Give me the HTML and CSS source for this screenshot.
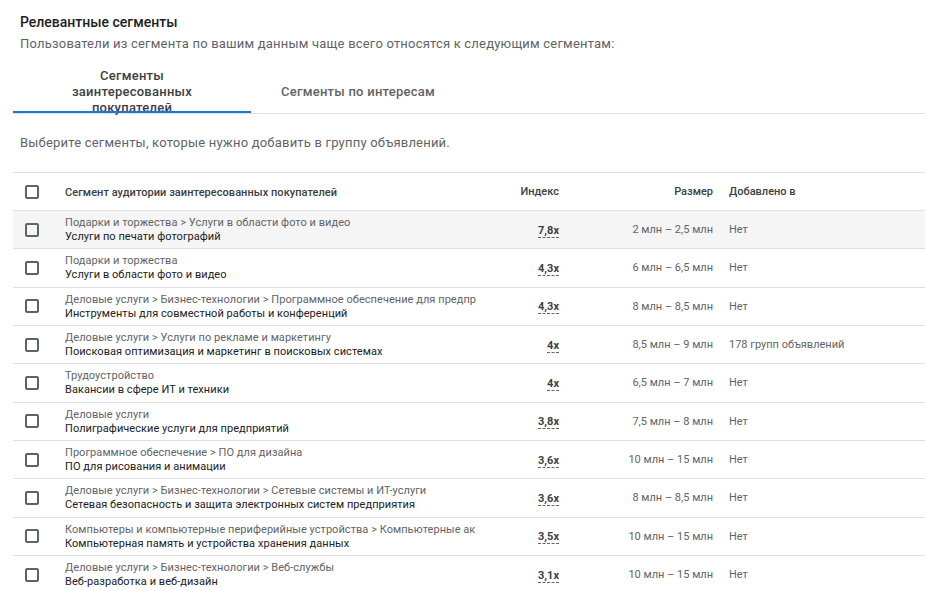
FILE: index.html
```html
<!DOCTYPE html>
<html lang="ru">
<head>
  <meta charset="UTF-8">
  <title>Релевантные сегменты</title>
  <link rel="stylesheet" href="styles.css">
</head>
<body>

<div class="panel">
  <h1 class="title">Релевантные сегменты</h1>
  <p class="subtitle">Пользователи из сегмента по вашим данным чаще всего относятся к следующим сегментам:</p>

  <div class="tabs">
    <div class="tab active">Сегменты<br>заинтересованных<br>покупателей</div>
    <div class="tab">Сегменты по интересам</div>
  </div>

  <p class="hint">Выберите сегменты, которые нужно добавить в группу объявлений.</p>

  <div class="table">
    <div class="row head">
      <div class="cell check"><span class="box"></span></div>
      <div class="cell seg">Сегмент аудитории заинтересованных покупателей</div>
      <div class="cell idx">Индекс</div>
      <div class="cell size">Размер</div>
      <div class="cell added">Добавлено в</div>
    </div>

    <div class="row hover">
      <div class="cell check"><span class="box"></span></div>
      <div class="cell seg"><span class="path">Подарки и торжества &gt; Услуги в области фото и видео</span><span class="name">Услуги по печати фотографий</span></div>
      <div class="cell idx"><span class="num">7,8x</span></div>
      <div class="cell size">2 млн – 2,5 млн</div>
      <div class="cell added">Нет</div>
    </div>

    <div class="row">
      <div class="cell check"><span class="box"></span></div>
      <div class="cell seg"><span class="path">Подарки и торжества</span><span class="name">Услуги в области фото и видео</span></div>
      <div class="cell idx"><span class="num">4,3x</span></div>
      <div class="cell size">6 млн – 6,5 млн</div>
      <div class="cell added">Нет</div>
    </div>

    <div class="row">
      <div class="cell check"><span class="box"></span></div>
      <div class="cell seg"><span class="path">Деловые услуги &gt; Бизнес-технологии &gt; Программное обеспечение для предпр</span><span class="name">Инструменты для совместной работы и конференций</span></div>
      <div class="cell idx"><span class="num">4,3x</span></div>
      <div class="cell size">8 млн – 8,5 млн</div>
      <div class="cell added">Нет</div>
    </div>

    <div class="row">
      <div class="cell check"><span class="box"></span></div>
      <div class="cell seg"><span class="path">Деловые услуги &gt; Услуги по рекламе и маркетингу</span><span class="name">Поисковая оптимизация и маркетинг в поисковых системах</span></div>
      <div class="cell idx"><span class="num">4x</span></div>
      <div class="cell size">8,5 млн – 9 млн</div>
      <div class="cell added">178 групп объявлений</div>
    </div>

    <div class="row">
      <div class="cell check"><span class="box"></span></div>
      <div class="cell seg"><span class="path">Трудоустройство</span><span class="name">Вакансии в сфере ИТ и техники</span></div>
      <div class="cell idx"><span class="num">4x</span></div>
      <div class="cell size">6,5 млн – 7 млн</div>
      <div class="cell added">Нет</div>
    </div>

    <div class="row">
      <div class="cell check"><span class="box"></span></div>
      <div class="cell seg"><span class="path">Деловые услуги</span><span class="name">Полиграфические услуги для предприятий</span></div>
      <div class="cell idx"><span class="num">3,8x</span></div>
      <div class="cell size">7,5 млн – 8 млн</div>
      <div class="cell added">Нет</div>
    </div>

    <div class="row">
      <div class="cell check"><span class="box"></span></div>
      <div class="cell seg"><span class="path">Программное обеспечение &gt; ПО для дизайна</span><span class="name">ПО для рисования и анимации</span></div>
      <div class="cell idx"><span class="num">3,6x</span></div>
      <div class="cell size">10 млн – 15 млн</div>
      <div class="cell added">Нет</div>
    </div>

    <div class="row">
      <div class="cell check"><span class="box"></span></div>
      <div class="cell seg"><span class="path">Деловые услуги &gt; Бизнес-технологии &gt; Сетевые системы и ИТ-услуги</span><span class="name">Сетевая безопасность и защита электронных систем предприятия</span></div>
      <div class="cell idx"><span class="num">3,6x</span></div>
      <div class="cell size">8 млн – 8,5 млн</div>
      <div class="cell added">Нет</div>
    </div>

    <div class="row">
      <div class="cell check"><span class="box"></span></div>
      <div class="cell seg"><span class="path">Компьютеры и компьютерные периферийные устройства &gt; Компьютерные ак</span><span class="name">Компьютерная память и устройства хранения данных</span></div>
      <div class="cell idx"><span class="num">3,5x</span></div>
      <div class="cell size">10 млн – 15 млн</div>
      <div class="cell added">Нет</div>
    </div>

    <div class="row">
      <div class="cell check"><span class="box"></span></div>
      <div class="cell seg"><span class="path">Деловые услуги &gt; Бизнес-технологии &gt; Веб-службы</span><span class="name">Веб-разработка и веб-дизайн</span></div>
      <div class="cell idx"><span class="num">3,1x</span></div>
      <div class="cell size">10 млн – 15 млн</div>
      <div class="cell added">Нет</div>
    </div>
  </div>
</div>

</body>
</html>
```

FILE: styles.css
```css
body {
  margin: 0;
  background: #fff;
  font-family: Roboto, "Liberation Sans", sans-serif;
  color: #202124;
}
.panel {
  padding: 12px 0 0 13px;
}
.title {
  margin: 0;
  padding-left: 7px;
  font-size: 14px;
  font-weight: 500;
  line-height: 20px;
  color: #202124;
}
.subtitle {
  margin: 2px 0 0;
  padding-left: 7px;
  font-size: 13px;
  letter-spacing: 0.2px;
  line-height: 20px;
  color: #5f6368;
}

/* tabs */
.tabs {
  display: flex;
  margin-top: 13px;
  height: 46px;
  border-bottom: 1px solid #e0e0e0;
}
.tab {
  width: 238px;
  display: flex;
  align-items: center;
  justify-content: center;
  text-align: center;
  font-size: 13px;
  font-weight: 500;
  letter-spacing: 0.25px;
  line-height: 16px;
  color: #5f6368;
  position: relative;
  padding-top: 4px;
  box-sizing: border-box;
}
.tab + .tab {
  width: auto;
  padding: 4px 30px 0;
}
.tab.active {
  color: #3c4043;
}
.tab.active::after {
  content: "";
  position: absolute;
  left: 0;
  right: 0;
  bottom: 0;
  height: 2px;
  background: #1a73e8;
}

.hint {
  margin: 19px 0 0;
  padding-left: 7px;
  font-size: 13px;
  letter-spacing: 0.2px;
  line-height: 20px;
  color: #5f6368;
}

/* table */
.table {
  margin-top: 19px;
  border-top: 1px solid #e0e0e0;
}
.row {
  display: grid;
  grid-template-columns: 52px 413px 81px 154px 1fr;
  height: 38.33px;
  box-sizing: border-box;
  border-bottom: 1px solid #e0e0e0;
  align-items: center;
  font-size: 11px;
  color: #5f6368;
}
.row.head {
  height: 38px;
  font-weight: 500;
  color: #3c4043;
}
.row.hover {
  background: #f5f5f5;
}
.cell {
  white-space: nowrap;
}
.check {
  padding-left: 12px;
  display: flex;
  align-items: center;
}
.box {
  display: block;
  width: 14px;
  height: 14px;
  box-sizing: border-box;
  border: 2px solid #5f6368;
  border-radius: 2px;
}
.seg {
  overflow: hidden;
  letter-spacing: 0.05px;
  padding-top: 1px;
}
.seg .path,
.seg .name {
  display: block;
  line-height: 14px;
  overflow: hidden;
}
.seg .path {
  color: #5f6368;
}
.seg .name {
  color: #202124;
}
.idx,
.size {
  text-align: right;
}
.num {
  display: inline-block;
  line-height: 13px;
  font-weight: 700;
  color: #3c4043;
  border-bottom: 1px dashed #5f6368;
  margin-top: 2px;
}
.added {
  padding-left: 16px;
}
```
